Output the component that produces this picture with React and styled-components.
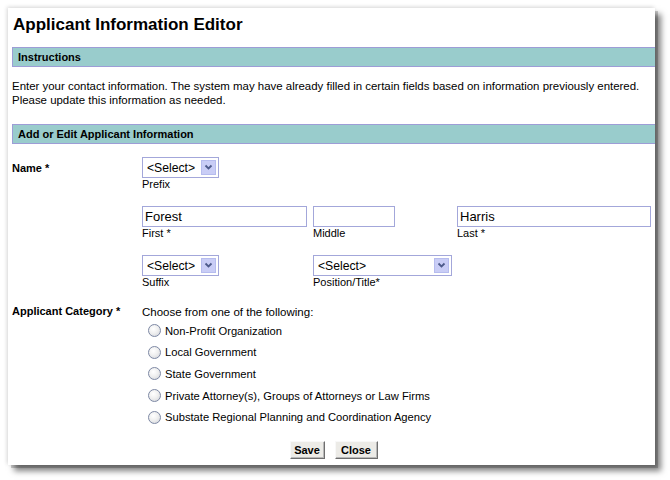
import React from 'react';
import styled, { createGlobalStyle } from 'styled-components';

const GlobalStyle = createGlobalStyle`
  html, body { margin: 0; padding: 0; background: #fff; }
  body { font-family: "Liberation Sans", Arial, sans-serif; color: #000; }
`;

const Page = styled.div`
  padding: 8px 0 0 8px;
  height: 480px;
  box-sizing: border-box;
`;

const Panel = styled.div`
  width: 647px;
  height: 457px;
  box-sizing: border-box;
  background: #fff;
  padding: 7px 0 0 4px;
  box-shadow: 3px 3px 0 rgba(0, 0, 0, 0.18), 6px 6px 6px rgba(0, 0, 0, 0.5), -1px -1px 4px rgba(0, 0, 0, 0.16);
  display: flex;
  flex-direction: column;
`;

const Title = styled.h1`
  margin: 0 0 12px 1px;
  font-size: 17px;
  line-height: 20px;
  font-weight: bold;
`;

const Bar = styled.div`
  height: 20px;
  box-sizing: border-box;
  background: #99cccc;
  border: 1px solid #9d9dd6;
  border-right: none;
  padding-left: 5px;
  font-size: 11px;
  font-weight: bold;
  line-height: 18px;
  margin-top: ${(p) => p.$mt || 0}px;
`;

const Para = styled.p`
  margin: 12px 0 0 0;
  font-size: 11.45px;
  line-height: 14px;
`;

const FormRow = styled.div`
  display: grid;
  grid-template-columns: 130px 1fr;
  margin-top: ${(p) => p.$mt || 0}px;
`;

const RowLabel = styled.div`
  font-size: 11px;
  font-weight: bold;
  line-height: 14px;
  padding-top: ${(p) => p.$pt || 0}px;
`;

const NameGrid = styled.div`
  display: grid;
  grid-template-columns: 171px 144px 198px;
  row-gap: 15px;
`;

const Field = styled.div`
  display: flex;
  flex-direction: column;
  align-items: flex-start;
  grid-column: ${(p) => p.$span || 'auto'};
`;

const Caption = styled.span`
  font-size: 11px;
  line-height: 13px;
`;

const TextInput = styled.input`
  width: ${(p) => p.$w}px;
  height: 21px;
  box-sizing: border-box;
  border: 1px solid #a3a7da;
  padding: 0 2px;
  margin: 0;
  font-family: "Liberation Sans", Arial, sans-serif;
  font-size: 13px;
  color: #000;
  outline: none;
`;

const SelectBox = styled.div`
  width: ${(p) => p.$w}px;
  height: 21px;
  box-sizing: border-box;
  border: 1px solid #a3a7da;
  display: flex;
  align-items: center;
  padding: 1px 2px 1px 0;
  background: #fff;
`;

const NativeSelect = styled.select`
  appearance: none;
  -webkit-appearance: none;
  border: none;
  background: transparent;
  flex: 1;
  min-width: 0;
  height: 100%;
  padding: 0 0 0 4px;
  margin: 0;
  font-family: "Liberation Sans", Arial, sans-serif;
  font-size: 12.2px;
  color: #000;
  outline: none;
`;

const ArrowBox = styled.span`
  width: 15px;
  height: 15px;
  box-sizing: border-box;
  background: #c9cdf6;
  border: 1px solid #b6bcee;
  display: flex;
  align-items: center;
  justify-content: center;
  flex-shrink: 0;
`;

const CategoryBody = styled.div`
  display: flex;
  flex-direction: column;
`;

const Prompt = styled.div`
  font-size: 11.5px;
  line-height: 14px;
  padding-top: 0.5px;
`;

const RadioList = styled.div`
  display: flex;
  flex-direction: column;
  margin: 1.5px 0 0 6px;
`;

const RadioRow = styled.label`
  display: flex;
  align-items: center;
  height: 21.6px;
  font-size: 11.2px;
`;

const Radio = styled.input`
  appearance: none;
  -webkit-appearance: none;
  width: 13px;
  height: 13px;
  margin: 0 4px 0 0;
  border: 1px solid #7d88a4;
  border-radius: 50%;
  box-sizing: border-box;
  background: radial-gradient(circle at 40% 35%, #ffffff 0%, #f0f0f0 45%, #cfd2d8 100%);
`;

const ButtonRow = styled.div`
  display: flex;
  justify-content: center;
  gap: 10px;
  margin-top: 13px;
`;

const Button = styled.button`
  width: ${(p) => p.$w}px;
  height: 18px;
  box-sizing: border-box;
  padding: 0;
  font-family: "Liberation Sans", Arial, sans-serif;
  font-size: 11px;
  font-weight: bold;
  color: #000;
  background: #ecebe7;
  border: 1px solid;
  border-color: #f8f8f8 #6f6f6f #6f6f6f #f8f8f8;
  box-shadow: inset -1px -1px 0 #b8b8b8;
`;

const Chevron = () => (
  <svg width="9" height="7" viewBox="0 0 9 7">
    <path d="M1.5 1.5 L4.5 4.5 L7.5 1.5" fill="none" stroke="#4d5a8a" strokeWidth="1.8" />
  </svg>
);

const Select = ({ w }) => (
  <SelectBox $w={w}>
    <NativeSelect defaultValue="">
      <option value="">&lt;Select&gt;</option>
    </NativeSelect>
    <ArrowBox>
      <Chevron />
    </ArrowBox>
  </SelectBox>
);

const categories = [
  'Non-Profit Organization',
  'Local Government',
  'State Government',
  'Private Attorney(s), Groups of Attorneys or Law Firms',
  'Substate Regional Planning and Coordination Agency',
];

export default function App() {
  return (
    <>
      <GlobalStyle />
      <Page>
        <Panel>
          <Title>Applicant Information Editor</Title>
          <Bar>Instructions</Bar>
          <Para>
            Enter your contact information. The system may have already filled in certain fields based on information previously entered.
            <br />
            Please update this information as needed.
          </Para>
          <Bar $mt={17}>Add or Edit Applicant Information</Bar>

          <FormRow $mt={13}>
            <RowLabel $pt={4}>Name *</RowLabel>
            <NameGrid>
              <Field $span="1 / 4">
                <Select w={77} />
                <Caption>Prefix</Caption>
              </Field>
              <Field>
                <TextInput $w={165} defaultValue="Forest" />
                <Caption>First *</Caption>
              </Field>
              <Field>
                <TextInput $w={82} defaultValue="" />
                <Caption>Middle</Caption>
              </Field>
              <Field>
                <TextInput $w={194} defaultValue="Harris" />
                <Caption>Last *</Caption>
              </Field>
              <Field>
                <Select w={77} />
                <Caption>Suffix</Caption>
              </Field>
              <Field>
                <Select w={139} />
                <Caption>Position/Title*</Caption>
              </Field>
            </NameGrid>
          </FormRow>

          <FormRow $mt={15}>
            <RowLabel>Applicant Category *</RowLabel>
            <CategoryBody>
              <Prompt>Choose from one of the following:</Prompt>
              <RadioList>
                {categories.map((c) => (
                  <RadioRow key={c}>
                    <Radio type="radio" name="category" value={c} />
                    {c}
                  </RadioRow>
                ))}
              </RadioList>
            </CategoryBody>
          </FormRow>

          <ButtonRow>
            <Button $w={35}>Save</Button>
            <Button $w={43}>Close</Button>
          </ButtonRow>
        </Panel>
      </Page>
    </>
  );
}
